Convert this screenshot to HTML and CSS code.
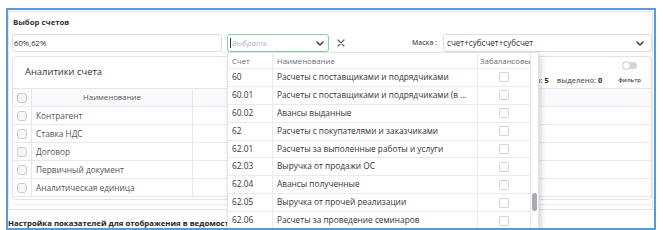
FILE: index.html
```html
<!DOCTYPE html>
<html lang="ru">
<head>
<meta charset="utf-8">
<title>Выбор счетов</title>
<link rel="stylesheet" href="styles.css">
</head>
<body>
<div class="frame">
  <div class="sec">
    <div class="sec-title">Выбор счетов</div>
    <div class="controls">
      <div class="inp">60%,62%</div>
      <div class="sel">
        <span class="caret"></span><span class="ph">Выбрать</span>
        <svg class="chev" width="8" height="5" viewBox="0 0 8 5"><path d="M1 1 L4 4 L7 1" fill="none" stroke="#444" stroke-width="1.6" stroke-linecap="round" stroke-linejoin="round"/></svg>
        <div class="dd">
          <div class="dd-list">
            <div class="dd-row dd-head">
              <div class="c1">Счет</div><div class="c2">Наименование</div><div class="c3 c3h">Забалансовый</div>
            </div>
            <div class="dd-row"><div class="c1">60</div><div class="c2">Расчеты с поставщиками и подрядчиками</div><div class="c3"><span class="cb"></span></div></div>
            <div class="dd-row"><div class="c1">60.01</div><div class="c2">Расчеты с поставщиками и подрядчиками (в ...</div><div class="c3"><span class="cb"></span></div></div>
            <div class="dd-row"><div class="c1">60.02</div><div class="c2">Авансы выданные</div><div class="c3"><span class="cb"></span></div></div>
            <div class="dd-row"><div class="c1">62</div><div class="c2">Расчеты с покупателями и заказчиками</div><div class="c3"><span class="cb"></span></div></div>
            <div class="dd-row"><div class="c1">62.01</div><div class="c2">Расчеты за выполенные работы и услуги</div><div class="c3"><span class="cb"></span></div></div>
            <div class="dd-row"><div class="c1">62.03</div><div class="c2">Выручка от продажи ОС</div><div class="c3"><span class="cb"></span></div></div>
            <div class="dd-row"><div class="c1">62.04</div><div class="c2">Авансы полученные</div><div class="c3"><span class="cb"></span></div></div>
            <div class="dd-row"><div class="c1">62.05</div><div class="c2">Выручка от прочей реализации</div><div class="c3"><span class="cb"></span></div></div>
            <div class="dd-row"><div class="c1">62.06</div><div class="c2">Расчеты за проведение семинаров</div><div class="c3"><span class="cb"></span></div></div>
          </div>
          <div class="dd-scroll"><div class="thumb"></div></div>
        </div>
      </div>
      <div class="clear">
        <svg width="8" height="8" viewBox="0 0 8 8"><path d="M1 1 L7 7 M7 1 L1 7" stroke="#666" stroke-width="1.2" stroke-linecap="round"/></svg>
      </div>
      <div class="spacer"></div>
      <div class="mask-label">Маска :</div>
      <div class="mask">
        <span>счет+субсчет+субсчет</span>
        <svg class="chev2" width="8" height="5" viewBox="0 0 8 5"><path d="M1 1 L4 4 L7 1" fill="none" stroke="#444" stroke-width="1.6" stroke-linecap="round" stroke-linejoin="round"/></svg>
      </div>
    </div>

    <div class="panel">
      <div class="ptitle">
        <div class="ptitle-text">Аналитики счета</div>
        <div class="ptools">
          <div class="stats"><span class="lbl">Всего:</span> <b>5</b><span class="lbl gap">выделено:</span> <b>0</b></div>
          <div class="filter">
            <div class="toggle"><span class="knob"></span></div>
            <div class="flabel">фильтр</div>
          </div>
        </div>
      </div>
      <div class="ptable">
        <div class="prow phead"><div class="pc1"><span class="pcb"></span></div><div class="pc2 center">Наименование</div><div class="pc3"></div></div>
        <div class="prow"><div class="pc1"><span class="pcb"></span></div><div class="pc2">Контрагент</div><div class="pc3"></div></div>
        <div class="prow"><div class="pc1"><span class="pcb"></span></div><div class="pc2">Ставка НДС</div><div class="pc3"></div></div>
        <div class="prow"><div class="pc1"><span class="pcb"></span></div><div class="pc2">Договор</div><div class="pc3"></div></div>
        <div class="prow"><div class="pc1"><span class="pcb"></span></div><div class="pc2">Первичный документ</div><div class="pc3"></div></div>
        <div class="prow"><div class="pc1"><span class="pcb"></span></div><div class="pc2">Аналитическая единица</div><div class="pc3"></div></div>
      </div>
    </div>
    <div class="sec-line"></div>
  </div>
  <div class="sec2-title">Настройка показателей для отображения в ведомости</div>
</div>
</body>
</html>
```
FILE: styles.css
```css
* { box-sizing: border-box; }
html, body { margin: 0; padding: 0; background: #fff; }
body {
  width: 663px;
  height: 230px;
  overflow: hidden;
  font-family: "Open Sans", "Noto Sans", sans-serif;
  color: #333;
}

.frame {
  margin: 8px 0 0 6px;
  width: 650px;
  height: 222px;
  border: 2px solid #5b9bd5;
  overflow: hidden;
}

.sec {
  margin-top: 1px;
  width: 645px;
  height: 199px;
  border: 1px solid #e4e4ec;
  padding: 0 0 0 3px;
}

.sec-title {
  padding: 3px 0 0 1px;
  font-size: 7.8px;
  font-weight: 700;
  line-height: 14px;
  color: #333;
}

.controls {
  margin-top: 5px;
  height: 18px;
  display: flex;
  align-items: stretch;
  width: 640px;
}

.inp {
  width: 210px;
  height: 18px;
  border: 1px solid #dcdce4;
  border-radius: 3px;
  padding-left: 1px;
  font-size: 7.7px;
  line-height: 16px;
  color: #333;
  margin-right: 5px;
}

.sel {
  position: relative;
  width: 102px;
  height: 18px;
  border: 1px solid #86cfa0;
  border-radius: 3px;
  display: flex;
  align-items: center;
  padding-left: 2px;
}
.caret {
  width: 1px;
  height: 10px;
  background: #333;
  margin-right: 1px;
}
.ph {
  font-size: 8px;
  font-style: italic;
  color: #b3b3bf;
  line-height: 16px;
}
.chev { position: absolute; left: 88px; top: 6px; }

.clear {
  width: 24px;
  display: flex;
  align-items: center;
  justify-content: center;
}

.spacer { flex: 1; }

.mask-label {
  font-size: 6.8px;
  font-weight: 600;
  color: #555;
  line-height: 18px;
  margin-right: 6px;
}
.mask {
  position: relative;
  width: 209px;
  height: 18px;
  border: 1px solid #dcdce4;
  border-radius: 3px;
  padding-left: 3px;
  font-size: 8.1px;
  line-height: 16px;
  color: #333;
}
.chev2 { position: absolute; right: 7px; top: 6px; }

/* dropdown */
.dd {
  position: absolute;
  left: -1px;
  top: 17px;
  width: 312px;
  height: 200px;
  background: #fff;
  border: 1px solid #e3e3ea;
  box-shadow: 2px 3px 6px rgba(0, 0, 0, 0.18);
  display: flex;
  z-index: 10;
}
.dd-list {
  width: 303px;
  border-right: 1px solid #e6e6ee;
}
.dd-scroll {
  position: relative;
  width: 7px;
}
.thumb {
  position: absolute;
  left: 1px;
  top: 140px;
  width: 5px;
  height: 18px;
  border-radius: 3px;
  background: #a9a9b1;
}
.dd-row {
  display: flex;
  height: 17.9px;
  border-bottom: 1px solid #e9e9ef;
  font-size: 8.3px;
  line-height: 16.9px;
  color: #333;
}
.dd-row.dd-head {
  height: 16px;
  padding-top: 1px;
  line-height: 14px;
  font-size: 7.8px;
  color: #6b6b73;
}
.c1 {
  width: 45px;
  padding-left: 4px;
  border-right: 1px solid #e9e9ef;
}
.c2 {
  width: 205px;
  padding-left: 4px;
  border-right: 1px solid #e9e9ef;
  white-space: nowrap;
  overflow: hidden;
  text-overflow: ellipsis;
}
.c3 {
  flex: 1;
  display: flex;
  align-items: center;
  justify-content: center;
  overflow: hidden;
}
.c3h {
  justify-content: flex-start;
  padding-left: 2px;
  white-space: nowrap;
}
.cb {
  width: 10px;
  height: 10px;
  border: 1px solid #d3d3db;
  border-radius: 2px;
  background: #fff;
}

/* panel */
.panel {
  margin-top: 4px;
  width: 640px;
  height: 144px;
  border: 1px solid #e2e2ea;
  border-radius: 4px;
}
.ptitle {
  height: 32px;
  border-bottom: 1px solid #e6e6ee;
  display: flex;
  justify-content: space-between;
}
.ptitle-text {
  padding-left: 12px;
  font-size: 9.4px;
  line-height: 30px;
  color: #333;
}
.ptools {
  display: flex;
  align-items: flex-end;
  padding: 0 10px 3px 0;
}
.stats {
  font-size: 7.4px;
  font-weight: 600;
  line-height: 10px;
  color: #666;
  margin-right: 16px;
  white-space: nowrap;
}
.stats b { color: #222; font-weight: 700; }
.stats .gap { margin-left: 8px; }
.filter {
  display: flex;
  flex-direction: column;
  align-items: center;
}
.toggle {
  width: 14px;
  height: 7px;
  border-radius: 4px;
  background: #d5d5dc;
  margin-bottom: 6px;
  position: relative;
}
.knob {
  position: absolute;
  left: -1px;
  top: -1px;
  width: 9px;
  height: 9px;
  border-radius: 50%;
  background: #fff;
  border: 1px solid #c6c6ce;
}
.flabel {
  font-size: 6px;
  font-weight: 600;
  line-height: 10px;
  color: #444;
}

.ptable { width: 638px; }
.prow {
  display: flex;
  height: 18px;
  border-bottom: 1px solid #e8e8ee;
  font-size: 8.3px;
  line-height: 17px;
  color: #555;
}
.prow.phead {
  background: #fafafc;
  font-size: 7.8px;
  color: #555;
}
.pc1 {
  width: 19px;
  border-right: 1px solid #e6e6ee;
  display: flex;
  align-items: center;
  justify-content: center;
}
.pc2 {
  width: 161px;
  padding-left: 4px;
  border-right: 1px solid #e6e6ee;
}
.pc2.center { text-align: center; padding-left: 0; }
.pc3 { flex: 1; }
.pcb {
  width: 10px;
  height: 10px;
  border: 1px solid #cbcbd3;
  border-radius: 3px;
  background: #f6f6f8;
}

.sec-line {
  margin-top: 4px;
  width: 640px;
  border-top: 1px solid #ececf1;
}

.sec2-title {
  margin-top: 6px;
  font-size: 7.8px;
  font-weight: 700;
  line-height: 14px;
  color: #222;
  white-space: nowrap;
}
```
